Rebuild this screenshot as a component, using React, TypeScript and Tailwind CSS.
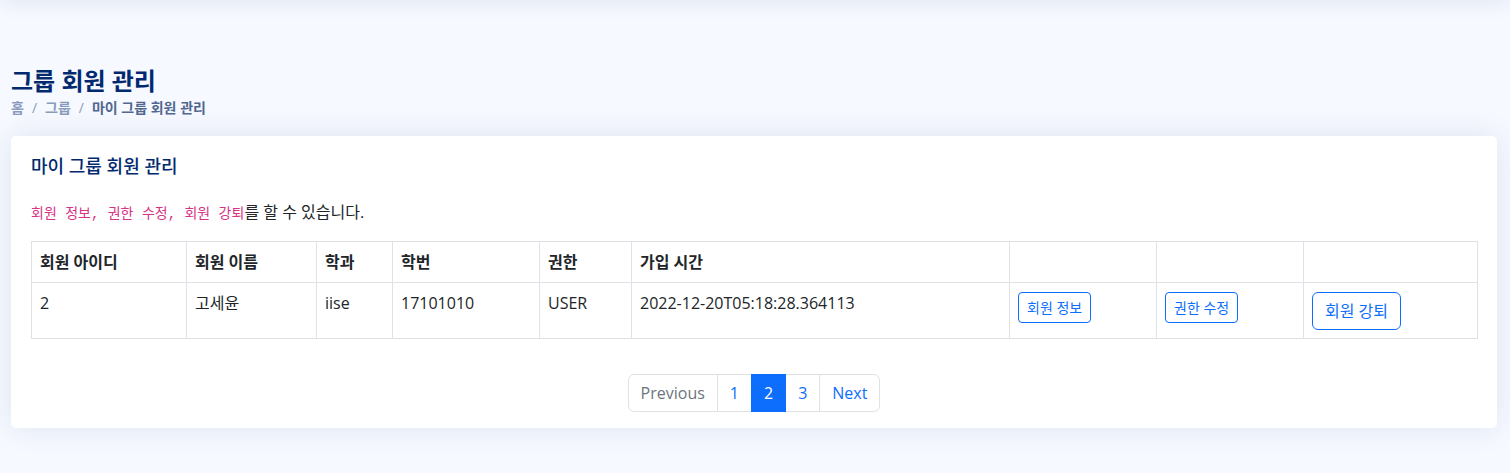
import React from "react";

const font = { fontFamily: "'Open Sans', 'Noto Sans CJK KR', sans-serif" };

const columns = [
  { label: "회원 아이디", w: "w-[155px]" },
  { label: "회원 이름", w: "w-[130px]" },
  { label: "학과", w: "w-[76px]" },
  { label: "학번", w: "w-[147px]" },
  { label: "권한", w: "w-[92px]" },
  { label: "가입 시간", w: "w-[378px]" },
  { label: "", w: "w-[147px]" },
  { label: "", w: "w-[147px]" },
  { label: "", w: "w-[174px]" },
];

export default function App() {
  return (
    <div
      className="min-h-[473px] w-full bg-[#f6f9ff] text-[#212529] relative overflow-hidden font-['Open_Sans','Noto_Sans_CJK_KR',sans-serif]"
      style={font}
    >
      {/* header shadow peeking in at the top */}
      <div className="absolute left-0 right-0 -top-4 h-4 shadow-[0_2px_20px_rgba(1,41,112,0.1)]" />

      <main className="pl-[11px] pr-[13px] pt-[66px]">
        {/* Page title */}
        <div className="mb-[18px]">
          <h1 className="text-[24px] leading-[29px] font-semibold text-[#012970]">
            그룹 회원 관리
          </h1>
          <nav className="flex items-center text-[14px] leading-[21px] font-semibold text-[#899bbd] mt-[2px]">
            <span>홈</span>
            <span className="px-2 font-normal">/</span>
            <span>그룹</span>
            <span className="px-2 font-normal">/</span>
            <span className="text-[#51678f]">마이 그룹 회원 관리</span>
          </nav>
        </div>

        {/* Card */}
        <section className="bg-white rounded-[5px] shadow-[0_0_30px_rgba(1,41,112,0.1)] px-5 pb-4">
          <h5 className="pt-[19px] pb-[15px] text-[18px] leading-[22px] font-medium text-[#012970]">
            마이 그룹 회원 관리
          </h5>

          <p className="text-[16px] leading-[24px] mt-[8px] mb-[15px]">
            <code className="text-[14px] text-[#d63384] font-['Liberation_Mono','Noto_Sans_CJK_KR',monospace]">
              회원 정보, 권한 수정, 회원 강퇴
            </code>
            를 할 수 있습니다.
          </p>

          <table className="w-[1446px] table-fixed border-collapse text-[16px]">
            <thead>
              <tr>
                {columns.map((c, i) => (
                  <th
                    key={i}
                    className={`${c.w} h-[41px] border border-[#dee2e6] px-2 py-2 text-left font-bold leading-[24px] align-top`}
                  >
                    {c.label}
                  </th>
                ))}
              </tr>
            </thead>
            <tbody>
              <tr>
                <Td>2</Td>
                <Td>고세윤</Td>
                <Td>iise</Td>
                <Td>17101010</Td>
                <Td>USER</Td>
                <Td>2022-12-20T05:18:28.364113</Td>
                <Td>
                  <button className="mt-px h-[31px] px-2 rounded-[4px] border border-[#0d6efd] text-[#0d6efd] text-[14px] leading-[21px]">
                    회원 정보
                  </button>
                </Td>
                <Td>
                  <button className="mt-px h-[31px] px-2 rounded-[4px] border border-[#0d6efd] text-[#0d6efd] text-[14px] leading-[21px]">
                    권한 수정
                  </button>
                </Td>
                <Td>
                  <button className="mt-px h-[38px] px-3 rounded-[6px] border border-[#0d6efd] text-[#0d6efd] text-[16px] leading-[24px]">
                    회원 강퇴
                  </button>
                </Td>
              </tr>
            </tbody>
          </table>

          {/* Pagination */}
          <div className="flex justify-center mt-[35px]">
            <ul className="flex text-[16px] leading-[24px]">
              <li className="h-[38px] px-3 py-[6px] border border-[#dee2e6] rounded-l-[6px] text-[#6c757d]">
                Previous
              </li>
              <li className="h-[38px] px-3 py-[6px] border border-[#dee2e6] -ml-px text-[#0d6efd]">1</li>
              <li className="h-[38px] px-3 py-[6px] border border-[#0d6efd] -ml-px bg-[#0d6efd] text-white z-10">
                2
              </li>
              <li className="h-[38px] px-3 py-[6px] border border-[#dee2e6] -ml-px text-[#0d6efd]">3</li>
              <li className="h-[38px] px-3 py-[6px] border border-[#dee2e6] -ml-px rounded-r-[6px] text-[#0d6efd]">
                Next
              </li>
            </ul>
          </div>
        </section>
      </main>
    </div>
  );
}

function Td({ children }: { children: React.ReactNode }) {
  return (
    <td className="h-[55px] border border-[#dee2e6] px-2 py-2 align-top leading-[24px]">
      {children}
    </td>
  );
}
